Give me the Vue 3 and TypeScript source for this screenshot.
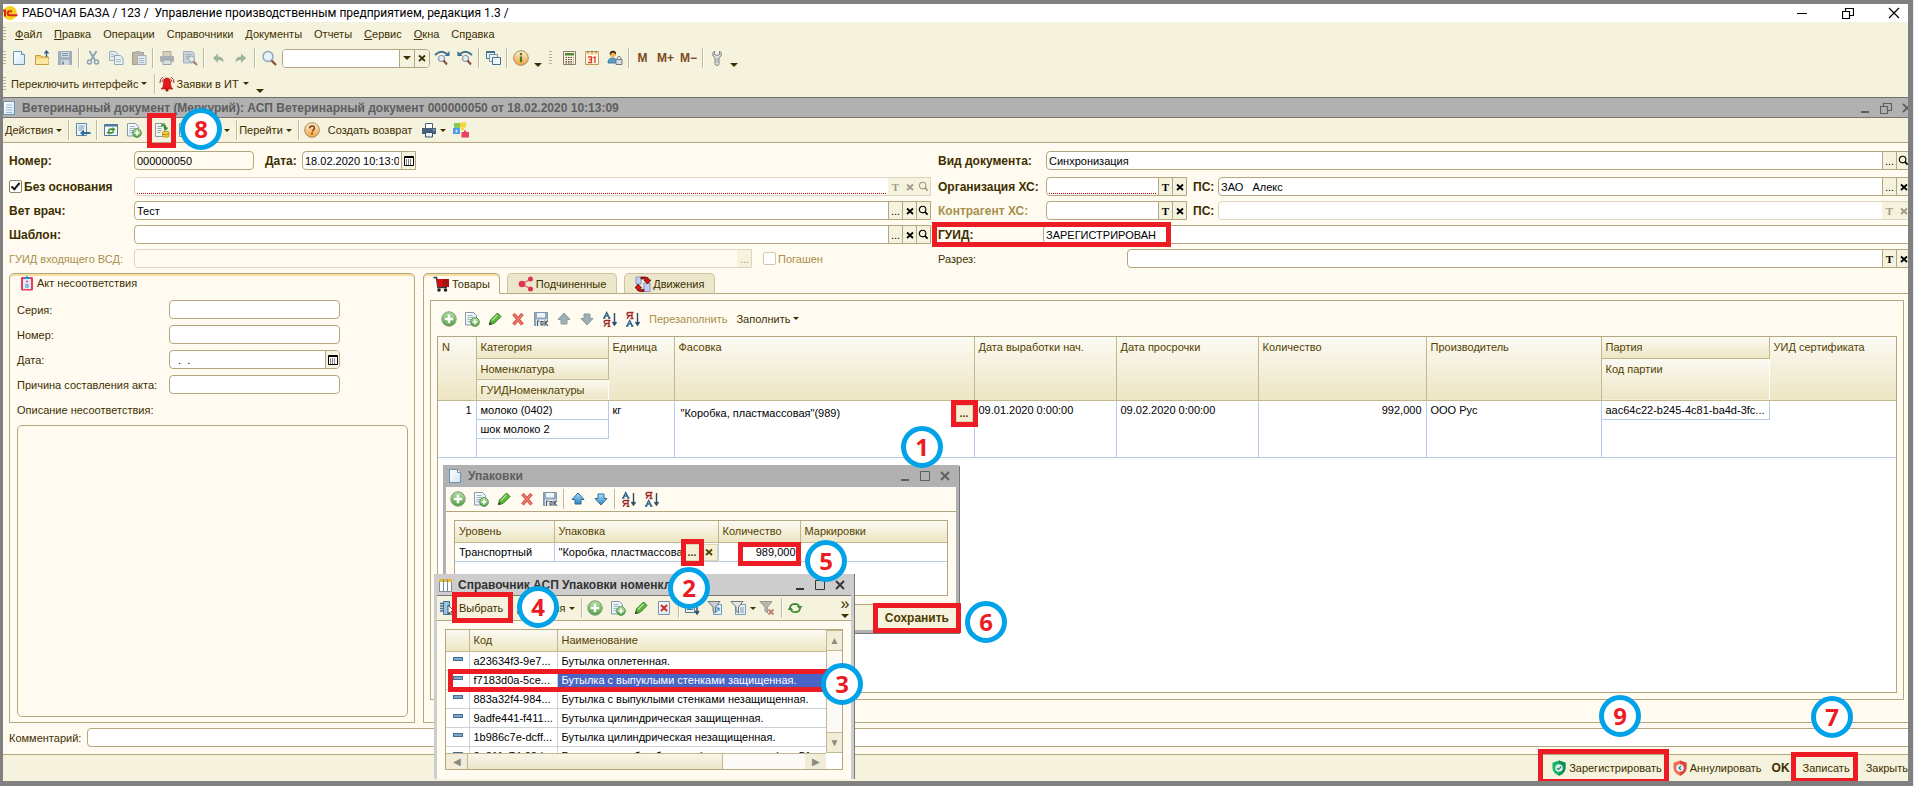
<script setup lang="ts">
import { ref } from 'vue'

interface Callout { n: number; cls: string }

const menu: { pre: string; key: string; post: string }[] = [
  { pre: '', key: 'Ф', post: 'айл' },
  { pre: '', key: 'П', post: 'равка' },
  { pre: 'Операции', key: '', post: '' },
  { pre: 'Справочники', key: '', post: '' },
  { pre: 'Документы', key: '', post: '' },
  { pre: 'Отчеты', key: '', post: '' },
  { pre: '', key: 'С', post: 'ервис' },
  { pre: '', key: 'О', post: 'кна' },
  { pre: 'Сп', key: 'р', post: 'авка' }
]

const mainTools: string[] = [
  'new', 'open', 'save-off', '|', 'cut', 'copy', 'paste', '|', 'print-off', 'preview', '|', 'undo', 'redo', '|', 'zoom'
]
const rowTools: string[] = ['add', 'addcopy', 'edit', 'del', 'saveok', 'up-off', 'down-off', 'sortaz', 'sortza']
const packTools: string[] = ['add', 'addcopy', 'edit', 'del', 'saveok', '|', 'up', 'down', '|', 'sortaz', 'sortza']

const packages = [
  { code: 'a23634f3-9e7...', name: 'Бутылка оплетенная.' },
  { code: 'f7183d0a-5ce...', name: 'Бутылка с выпуклыми стенками защищенная.' },
  { code: '883a32f4-984...', name: 'Бутылка с выпуклыми стенками незащищенная.' },
  { code: '9adfe441-f411...', name: 'Бутылка цилиндрическая защищенная.' },
  { code: '1b986c7e-dcff...', name: 'Бутылка цилиндрическая незащищенная.' },
  { code: '2a811c74-08d...', name: 'Бутылка и колба объемом (вместимостью) до 51' }
]
const selected = ref(1)

const callouts: Callout[] = [1, 2, 3, 4, 5, 6, 7, 8, 9].map(n => ({ n, cls: 'c' + n }))

const noBase = ref(true)
const docNumber = ref('000000050')
const docDate = ref('18.02.2020 10:13:09')
const vet = ref('Тест')
const docKind = ref('Синхронизация')
const org = ref('ЗАО   Алекс')
const guid = ref('ЗАРЕГИСТРИРОВАН')
</script>

<template>
  <svg class="defs" width="0" height="0" aria-hidden="true">
    <defs>
      <linearGradient id="g-green" x1="0" y1="0" x2="0" y2="1"><stop offset="0" stop-color="#b5dfa4" /><stop offset="1" stop-color="#4f9e3f" /></linearGradient>
      <linearGradient id="g-blue" x1="0" y1="0" x2="0" y2="1"><stop offset="0" stop-color="#a9dcf8" /><stop offset="1" stop-color="#2f86c8" /></linearGradient>
      <linearGradient id="g-orange" x1="0" y1="0" x2="0" y2="1"><stop offset="0" stop-color="#fff1cf" /><stop offset="1" stop-color="#f0a23c" /></linearGradient>
      <linearGradient id="g-page" x1="0" y1="0" x2="1" y2="1"><stop offset="0" stop-color="#ffffff" /><stop offset="1" stop-color="#cfe6f6" /></linearGradient>
    </defs>
    <symbol id="i-logo" viewBox="0 0 16 16"><circle cx="7" cy="8" r="7" fill="#f7d21c" /><path d="M0 5.500h2v6M9 6.200H6.500q-1.800 0-1.800 2t1.800 2h8" fill="none" stroke="#d9251d" stroke-width="2" /></symbol>
    <symbol id="i-new" viewBox="0 0 16 16"><path d="M2.500 1.500h8l3 3v10h-11z" fill="url(#g-page)" stroke="#6d93b3" /><path d="M10.500 1.500v3h3" fill="#fff" stroke="#6d93b3" /></symbol>
    <symbol id="i-page" viewBox="0 0 16 16"><path d="M2.500 1.500h11v13h-11z" fill="url(#g-page)" stroke="#6d93b3" /><path d="M5 5h6M5 7.500h6M5 10h6M5 12.500h6" stroke="#a3bccb" /></symbol>
    <symbol id="i-open" viewBox="0 0 16 16"><path d="M1.500 14.500v-9h5l1 1.500h7v7.500z" fill="#f3cf6c" stroke="#c79c3c" /><path d="M2 14v-5.500h12.500V14z" fill="#fbe7a0" /><path d="M12.500 7V1.500M10.500 3.500l2-2.500 2 2.500" fill="none" stroke="#2f5f80" stroke-width="1.300" /></symbol>
    <symbol id="i-save-off" viewBox="0 0 16 16"><path d="M1.500 1.500h13v13h-13z" fill="#9fb2c0" stroke="#9aabb7" /><path d="M4 2h8v5H4zM4 10h8v5H4z" fill="#cfd9df" /><path d="M5 3.500h6M5 5.500h6" stroke="#8499a8" /><path d="M5 11.500h2v3H5z" fill="#7b8e9c" /></symbol>
    <symbol id="i-cut" viewBox="0 0 16 16"><path d="M4.500 1l5.500 9M11.500 1L6 10" stroke="#8da3b3" stroke-width="1.800" /><circle cx="4.500" cy="12" r="2" fill="none" stroke="#8da3b3" stroke-width="1.500" /><circle cx="11.500" cy="12" r="2" fill="none" stroke="#8da3b3" stroke-width="1.500" /></symbol>
    <symbol id="i-copy" viewBox="0 0 16 16"><path d="M1.500 1.500h6l2 2v7h-8z" fill="#e3ebf0" stroke="#9db2c1" /><path d="M6.500 5.500h6l2.500 2.500v6.500H6.500z" fill="#e9f0f4" stroke="#8fa8ba" /><path d="M8 9.500h5M8 11.500h5M3 4.500h3M3 6.500h3" stroke="#a6bac7" /></symbol>
    <symbol id="i-paste" viewBox="0 0 16 16"><path d="M1.500 2.500h11v12h-11z" fill="#c2b8a0" stroke="#a99f88" /><path d="M4.500 1h5v3h-5z" fill="#a9b4bb" /><path d="M6.500 5.500h8.500v9H6.500z" fill="#e2eaf0" stroke="#9db0be" /><path d="M8 8.500h5M8 10.500h5M8 12.500h5" stroke="#a6bac7" /></symbol>
    <symbol id="i-print-off" viewBox="0 0 16 16"><path d="M4 1.500h8v5H4z" fill="#d9cdbd" stroke="#b3a898" /><rect x="1" y="6" width="14" height="6" rx="1" fill="#a9b0b5" /><path d="M4 10h8v4.500H4z" fill="#d8dfe3" stroke="#9aa3aa" /></symbol>
    <symbol id="i-preview" viewBox="0 0 16 16"><path d="M1.500 1.500h9l1.500 1.500v10h-10.500z" fill="#c9d4db" stroke="#a1b1bc" /><path d="M3.500 4.500h6M3.500 6.500h4M3.500 8.500h3" stroke="#9cafbc" /><circle cx="9.500" cy="9" r="3" fill="#dfe9ee" stroke="#97a5ae" /><path d="M11.500 11.500l3.500 3.500" stroke="#a87f6c" stroke-width="2" /></symbol>
    <symbol id="i-undo" viewBox="0 0 16 16"><path d="M3 8l5-4.500v3q6 0 5.500 6-1.500-3-5.500-2.500v3z" fill="#9db4a3" /></symbol>
    <symbol id="i-redo" viewBox="0 0 16 16"><path d="M13 8L8 3.500v3q-6 0-5.500 6 1.500-3 5.500-2.500v3z" fill="#9db4a3" /></symbol>
    <symbol id="i-zoom" viewBox="0 0 16 16"><circle cx="7" cy="6.500" r="5" fill="#e4f2fb" stroke="#8fa5b5" stroke-width="1.400" /><path d="M10.500 10.500l4.500 4.500" stroke="#8d4f40" stroke-width="2.400" /></symbol>
    <symbol id="i-findnext" viewBox="0 0 16 16"><path d="M1 5Q7-1 13 4" fill="none" stroke="#3b6f92" stroke-width="1.800" /><path d="M15.500 1v5h-5z" fill="#3b6f92" /><circle cx="7.500" cy="8.500" r="3" fill="#e4f2fb" stroke="#8d9ba6" stroke-width="1.200" /><path d="M9.500 10.500l3.500 4" stroke="#8d4f40" stroke-width="2" /></symbol>
    <symbol id="i-findprev" viewBox="0 0 16 16"><path d="M15 5Q9-1 3 4" fill="none" stroke="#3b6f92" stroke-width="1.800" /><path d="M.5 1v5h5z" fill="#3b6f92" /><circle cx="8.500" cy="8.500" r="3" fill="#e4f2fb" stroke="#8d9ba6" stroke-width="1.200" /><path d="M10.500 10.500l3.500 4" stroke="#8d4f40" stroke-width="2" /></symbol>
    <symbol id="i-windows" viewBox="0 0 16 16"><path d="M1.500 1.500h8v7h-8z" fill="#eaf3f8" stroke="#45708c" /><path d="M1 2h9" stroke="#45708c" stroke-width="2" /><path d="M4.500 4.500h8v7h-8z" fill="#eaf3f8" stroke="#6f94ab" /><path d="M7.500 7.500h8v7h-8z" fill="#eef6fa" stroke="#45708c" /></symbol>
    <symbol id="i-info" viewBox="0 0 16 16"><circle cx="8" cy="8" r="7.300" fill="url(#g-orange)" stroke="#a98a5e" /><path d="M8 3v2.200M8 6.500V12" stroke="#3f7a26" stroke-width="2.200" /></symbol>
    <symbol id="i-help" viewBox="0 0 16 16"><circle cx="8" cy="8" r="7.300" fill="url(#g-orange)" stroke="#a98a5e" /><path d="M5.700 6.300q0-2.400 2.400-2.400t2.300 2-2.300 3.200" fill="none" stroke="#7a3f1d" stroke-width="1.500" /><path d="M8 10.500v1.800" stroke="#7a3f1d" stroke-width="1.700" /></symbol>
    <symbol id="i-calc" viewBox="0 0 16 16"><path d="M2.500 1.500h12v13h-12z" fill="#fbf3dc" stroke="#8b7a66" /><path d="M4 3h9v2.500H4z" fill="#4f8a3c" /><path d="M4.500 7.500h8M4.500 9.500h8M4.500 11.500h8M4.500 13h8" stroke="#5c4630" stroke-dasharray="1.500 1" /></symbol>
    <symbol id="i-cal" viewBox="0 0 16 16"><path d="M1.500 1.500h13v13h-13z" fill="#fff8e6" stroke="#b79a62" /><path d="M1.500 2.500h13v2h-13z" fill="#f3d9a0" /><path d="M4 1v2M8 1v2M12 1v2" stroke="#6d5530" /><path d="M4 7h3.500v5.500H4M5 9.700h2.500M9 8l2-1v6" fill="none" stroke="#e5381e" stroke-width="1.300" /></symbol>
    <symbol id="i-user" viewBox="0 0 16 16"><path d="M1 13q0-5 4.500-5t4 5z" fill="#5c9fc6" stroke="#2c6a91" stroke-width=".8" /><circle cx="5.800" cy="4.300" r="3" fill="#f5b74f" /><path d="M2.500 4Q3 0 7 .8q3 1 1.800 4Q8 3 6 2.800q-2 0-2 2z" fill="#4b3220" /><path d="M9 9.500h6v5H9z" fill="#d6dee3" stroke="#6d7c87" /><path d="M10.200 9.500v-2q1.800-2.500 3.600 0v2" fill="none" stroke="#6d7c87" /></symbol>
    <symbol id="i-wrench" viewBox="0 0 16 16"><path d="M5.500 1Q2.500 3 4 6l2 1.500v6q0 2 2 2t2-2v-6L12 6q1.500-3-1.500-5v3.500L8 5.500 5.500 4.500z" fill="#e2e3e4" stroke="#808080" /><path d="M8 8v5" stroke="#9a9a9a" /></symbol>
    <symbol id="i-bell" viewBox="0 0 16 16"><path d="M8 2q3.500 0 3.500 5t2.500 6H2q2.500-1 2.500-6T8 2z" fill="#e01818" stroke="#9c1010" stroke-width=".6" /><circle cx="8" cy="14" r="1.600" fill="#b31111" /><path d="M1 7Q.5 3 4 1M15 7q.5-4-3-6M3 6q0-2 2-3.500M13 6q0-2-2-3.500" fill="none" stroke="#b03030" /></symbol>
    <symbol id="i-find-list" viewBox="0 0 16 16"><path d="M1.500 1.500h10v12h-10z" fill="#eef5fa" stroke="#5d87a6" /><path d="M3.500 4h6M3.500 6h6M3.500 8h4" stroke="#7699b0" /><path d="M5 11l4-3.500V10h6.500v2H9v2.500z" fill="#2f6d9b" /></symbol>
    <symbol id="i-refresh" viewBox="0 0 16 16"><path d="M1.500 2.500h13v11h-13z" fill="#f2f8fb" stroke="#4c7899" /><path d="M1 2.500h14v2H1z" fill="#4c7899" /><path d="M4.500 8.500q1.500-3 5-2l0-1.500 3 2.500-3 2V8.200q-2.500-.6-3.500.6zM11.500 9.500q-1.500 3-5 2l0 1.500-3-2.500 3-2v1.300q2.500.6 3.500-.6z" fill="#3d8f2e" /></symbol>
    <symbol id="i-addcopy" viewBox="0 0 16 16"><path d="M1.500 1.500h8l3 3v9.500h-11z" fill="url(#g-page)" stroke="#8a9aa5" /><path d="M3.500 4.500h5M3.500 6.500h6M3.500 8.500h4M3.500 10.500h3" stroke="#9fb4c0" /><circle cx="11" cy="11" r="4.400" fill="url(#g-green)" stroke="#4a8a3d" stroke-width=".8" /><path d="M11 8.500v5M8.500 11h5" stroke="#fff" stroke-width="1.700" /></symbol>
    <symbol id="i-post" viewBox="0 0 16 16"><path d="M1.500 1.500h9v13h-9z" fill="#f1f5ee" stroke="#8a9aa5" /><path d="M3.500 4.500h5M3.500 6.500h4M3.500 8.500h4M3.500 10.500h3" stroke="#93a6b0" /><path d="M7 2.500q5-1.500 5.500 3h2L12 8.500 9 5.500h1.500q0-2-3.500-1.500z" fill="#2f8f2a" /><path d="M8.500 10q3.500-2 6.500 0v4.500q-3 1.500-6.500 0z" fill="#f3cd3e" stroke="#b58c17" stroke-width=".8" /><path d="M8.500 12q3 1.500 6.500 0" stroke="#b58c17" fill="none" /></symbol>
    <symbol id="i-print" viewBox="0 0 16 16"><path d="M4.500 1.500h7v5h-7z" fill="#fff" stroke="#47637c" /><path d="M1 6h14v6H1z" fill="#47637c" /><path d="M4.500 10.500h7v4.500h-7z" fill="#eaf1f6" stroke="#3a5268" /><path d="M12 8h2" stroke="#9fd6f0" /></symbol>
    <symbol id="i-puzzle" viewBox="0 0 16 16"><path d="M1 1h6v5H1z" fill="#8ac75d" /><path d="M7 .5h6v5H7z" fill="#f3d834" /><circle cx="9.500" cy="7" r="1.600" fill="#f3d834" /><path d="M0 6h7v6H0z" fill="#4f9be6" /><path d="M2 9h3M3.500 7.500v3" stroke="#cfe6ff" /><path d="M8.500 10H11V8.500h2V10h3v5.500H8.500z" fill="#e8405f" /></symbol>
    <symbol id="i-add" viewBox="0 0 16 16"><circle cx="8" cy="8" r="7.200" fill="url(#g-green)" stroke="#7d9b76" /><path d="M8 3.800v8.400M3.800 8h8.400" stroke="#fff" stroke-width="2.600" /></symbol>
    <symbol id="i-edit" viewBox="0 0 16 16"><path d="M2.500 13.500l1-4.500 7-7 3.500 3.500-7 7z" fill="#5cb83a" stroke="#2e7d1c" /><path d="M2 14l.8-3 2.200 2.200z" fill="#3e3e2a" /><path d="M5 9.500L10.500 4" stroke="#b4e49c" stroke-width="1.300" /></symbol>
    <symbol id="i-del" viewBox="0 0 16 16"><path d="M3.500 3l9 10.500M12.500 3l-9 10.500" stroke="#c9423a" stroke-width="3.400" /><path d="M3.700 3.300l8.600 10M12.300 3.300l-8.600 10" stroke="#f0766a" stroke-width="1.800" /></symbol>
    <symbol id="i-saveok" viewBox="0 0 16 16"><path d="M1.500 1.500h13v13h-13z" fill="#90a9bd" stroke="#7b97ad" /><path d="M4 2h8v4.500H4z" fill="#edf3f7" /><path d="M3 8.500h12v6.500H3z" fill="#e8eef2" /><path d="M4.500 10v5M4 10h2.500M8 10.500h2v3.500H8zM12 9.500V15M15 9.500L12.500 12l2.500 3" fill="none" stroke="#4a5560" stroke-width="1.100" /></symbol>
    <symbol id="i-up-off" viewBox="0 0 16 16"><path d="M8 2l6 6.500h-3V13H5V8.500H2z" fill="#9daeb4" stroke="#8b9ca2" /></symbol>
    <symbol id="i-down-off" viewBox="0 0 16 16"><path d="M8 14L2 7.500h3V3h6v4.500h3z" fill="#9daeb4" stroke="#8b9ca2" /></symbol>
    <symbol id="i-up" viewBox="0 0 16 16"><path d="M8 2l6 6.500h-3V13H5V8.500H2z" fill="url(#g-blue)" stroke="#2b6c9d" /></symbol>
    <symbol id="i-down" viewBox="0 0 16 16"><path d="M8 14L2 7.500h3V3h6v4.500h3z" fill="url(#g-blue)" stroke="#2b6c9d" /></symbol>
    <symbol id="i-sortaz" viewBox="0 0 16 16"><path d="M1 7h2.500M6 7h2.500M2 7l2.700-5.500L7.500 7M3 5h3.500" fill="none" stroke="#2c6389" stroke-width="1.300" /><path d="M8.500 9.500H4q-2 0-2 1.500t2 1.500h3M7 9.500v6M4.500 12.500L2 15.500M5.500 15.500h3" fill="none" stroke="#a02828" stroke-width="1.300" /><path d="M12.500 2v11M10.500 11l2 3 2-3" fill="none" stroke="#2a4d66" stroke-width="1.400" /></symbol>
    <symbol id="i-sortza" viewBox="0 0 16 16"><path d="M8.500 1.500H4Q2 1.500 2 3t2 1.500h3M7 1.500v6M4.500 4.500L2 7.500M5.500 7.500h3" fill="none" stroke="#a02828" stroke-width="1.300" /><path d="M1 15h2.500M6 15h2.500M2 15l2.700-5.500L7.500 15M3 13h3.500" fill="none" stroke="#2c6389" stroke-width="1.300" /><path d="M12.500 2v11M10.500 11l2 3 2-3" fill="none" stroke="#2a4d66" stroke-width="1.400" /></symbol>
    <symbol id="i-clip" viewBox="0 0 16 16"><rect x="2" y="2" width="12" height="13.500" rx="1" fill="#ef3b5b" /><path d="M4 4h8v10H4z" fill="#dcecf8" /><path d="M5 4V2.500h1.500L8 .5l1.500 2H11V4z" fill="#2b8fe0" /><path d="M6 10h4M6 12h4M8 8.500v4" stroke="#5aa6df" /><circle cx="8" cy="6.500" r="1" fill="#ef3b5b" /></symbol>
    <symbol id="i-cart" viewBox="0 0 16 16"><path d="M.5 1.500h3l1.500 10h9" fill="none" stroke="#2d3b42" stroke-width="1.600" /><path d="M3.500 3H16v8H5z" fill="#d80f0f" /><path d="M10 3h6v8h-6z" fill="#9f1414" /><circle cx="6" cy="14" r="1.800" fill="#222" /><circle cx="12.500" cy="14" r="1.800" fill="#222" /></symbol>
    <symbol id="i-share" viewBox="0 0 16 16"><path d="M13 3L3.500 8l9.500 5" fill="none" stroke="#c88" stroke-width="1.500" /><circle cx="4" cy="8" r="3.300" fill="#e0354f" /><circle cx="12.500" cy="3" r="2.500" fill="#e0354f" /><circle cx="12.500" cy="13" r="2.500" fill="#e0354f" /></symbol>
    <symbol id="i-moves" viewBox="0 0 16 16"><path d="M1 1h5v7H1zM9 7h6v8.500H9z" fill="#c7cff0" stroke="#8b95c9" /><path d="M6 1h4q4 0 4 3h2l-3.500 4L9 4h2q0-1-2-1H6zM9 15.500H5q-3.500-.5-3.500-3.500H0l3-4 3.500 4H5q0 1.500 1 1.500h3z" fill="#e01414" stroke="#3a0808" stroke-width=".7" /></symbol>
    <symbol id="i-delpage" viewBox="0 0 16 16"><path d="M2.500 1.500h11v13h-11z" fill="url(#g-page)" stroke="#7d95a6" /><path d="M5 5l6 6M11 5l-6 6" stroke="#d32b22" stroke-width="2" /></symbol>
    <symbol id="i-level" viewBox="0 0 16 16"><path d="M1.500 3.500h9v9h-9z" fill="#e9f0f4" stroke="#5d7588" /><path d="M3 6.500h6M3 9.500h6" stroke="#5d7588" /><path d="M13 4v9M11 11l2 3 2-3" fill="none" stroke="#2a4d66" stroke-width="1.400" /></symbol>
    <symbol id="i-filter" viewBox="0 0 16 16"><path d="M6.500 4.500h8v10h-8z" fill="#dbeefa" stroke="#6f9fc0" /><path d="M9 12l3-4M9 8h3v3" fill="none" stroke="#2d78b0" /><path d="M1 1.500h12L8.500 7v6l-2.500-2V7z" fill="#c9ced1" stroke="#6f7578" /></symbol>
    <symbol id="i-filterlist" viewBox="0 0 16 16"><path d="M5.500 4.500h10v10h-10z" fill="#e6f1f8" stroke="#7f9cb0" /><path d="M10 8h4M10 10h4M10 12h4" stroke="#7f9cb0" /><path d="M1 1.500h12L8.500 7v6l-2.500-2V7z" fill="#e3e5e6" stroke="#6f7578" /></symbol>
    <symbol id="i-filteroff" viewBox="0 0 16 16"><path d="M1 1.500h12L8.500 7v6l-2.500-2V7z" fill="#b8b8ae" stroke="#98988e" /><path d="M9.500 9.500l5 5M14.500 9.500l-5 5" stroke="#c08078" stroke-width="1.800" /></symbol>
    <symbol id="i-cycle" viewBox="0 0 16 16"><path d="M3 8q0-4 5-4.200 3 0 4 2.200M13 8q0 4-5 4.200-3 0-4-2.200" fill="none" stroke="#3f8a35" stroke-width="1.700" /><path d="M9.800 6h5.700l-2.700 3.400zM6.200 10H.5l2.700-3.400z" fill="#3f8a35" /></symbol>
    <symbol id="i-select" viewBox="0 0 16 16"><path d="M1 3.500h5M1 6h5M1 8.500h5M1 11h5" stroke="#3b7299" stroke-width="1.500" /><path d="M4.500 1.500h6v13h-6z" fill="#9cc4de" stroke="#3b7299" /><path d="M9 5l6 6-3 .3 1.500 3-1.500.7-1.500-3-1.500 2z" fill="#fff" stroke="#333" stroke-width=".8" /></symbol>
    <symbol id="i-table" viewBox="0 0 16 16"><path d="M2.500 2.500h12v12h-12z" fill="#fff" stroke="#7a8a95" /><path d="M2 2h13v3H2z" fill="#e9b93a" /><path d="M6.500 2v12.500M10.500 2v12.500" stroke="#7a8a95" /></symbol>
    <symbol id="i-shield-ok" viewBox="0 0 16 16"><path d="M8 .5l6.500 2.300V8q0 5-6.500 7.800Q1.500 13 1.500 8V2.800z" fill="#12b76a" /><path d="M8 .5l6.500 2.300V8q0 5-6.500 7.800z" fill="#0a9152" /><circle cx="8" cy="8" r="3.800" fill="#dff0ee" /><path d="M6 8l1.500 1.600L10.200 6.500" fill="none" stroke="#3b7f86" stroke-width="1.200" /></symbol>
    <symbol id="i-shield-no" viewBox="0 0 16 16"><path d="M8 .5l6.500 2.300V8q0 5-6.500 7.800Q1.500 13 1.500 8V2.800z" fill="#f46a55" /><path d="M8 .5l6.500 2.300V8q0 5-6.500 7.800z" fill="#dd4536" /><circle cx="8" cy="8" r="3.800" fill="#dff0f2" /><path d="M9 6L7 8l2 2" fill="none" stroke="#3b7f86" stroke-width="1.200" /></symbol>
    <symbol id="i-lens" viewBox="0 0 12 12"><circle cx="5" cy="5" r="3.600" fill="none" stroke="currentColor" stroke-width="1.200" /><path d="M7.500 7.500l3 3" stroke="currentColor" stroke-width="2" /></symbol>
    <symbol id="i-grid" viewBox="0 0 10 10"><path d="M.5 .5h9v9h-9z" fill="#fff" stroke="#000" /><path d="M1 1.500h8" stroke="#000" /><path d="M2 4h6M2 6h6M2 8h6" stroke="#000" stroke-dasharray="1 1" /></symbol>
    <symbol id="i-x" viewBox="0 0 8 8"><path d="M1 1.500l6 5.500M7 1.500L1 7" stroke="currentColor" stroke-width="1.700" /></symbol>
    <symbol id="i-min" viewBox="0 0 12 12"><path d="M2 10h8" stroke="currentColor" stroke-width="2" /></symbol>
    <symbol id="i-thinmin" viewBox="0 0 12 12"><path d="M1 6.500h10" stroke="currentColor" /></symbol>
    <symbol id="i-max" viewBox="0 0 12 12"><path d="M1.500 1.500h9v9h-9z" fill="none" stroke="currentColor" /></symbol>
    <symbol id="i-restore" viewBox="0 0 12 12"><path d="M.5 4.500h7v7h-7zM3.500 4V1.500h8v7H8" fill="none" stroke="currentColor" stroke-width="1.200" /></symbol>
    <symbol id="i-close" viewBox="0 0 12 12"><path d="M2 2l8 8M10 2l-8 8" stroke="currentColor" stroke-width="1.800" /></symbol>
    <symbol id="i-thinclose" viewBox="0 0 12 12"><path d="M1 1l10 10M11 1L1 11" stroke="currentColor" stroke-width="1.200" /></symbol>
  </svg>

  <div class="screen">
    <div class="app">
      <header class="apptitle">
        <svg class="i16"><use href="#i-logo" /></svg>
        <h1>РАБОЧАЯ БАЗА / 123 /&nbsp; Управление производственным предприятием, редакция 1.3 /</h1>
        <span class="appbtns">
          <button aria-label="Свернуть"><svg class="i12"><use href="#i-thinmin" /></svg></button>
          <button aria-label="Развернуть"><svg class="i12"><use href="#i-restore" /></svg></button>
          <button aria-label="Закрыть"><svg class="i12"><use href="#i-thinclose" /></svg></button>
        </span>
      </header>

      <nav class="menu">
        <span class="grip"></span>
        <button v-for="m in menu" :key="m.pre + m.key + m.post">{{ m.pre }}<u v-if="m.key">{{ m.key }}</u>{{ m.post }}</button>
      </nav>

      <div class="tools">
        <span class="grip"></span>
        <template v-for="(t, i) in mainTools" :key="i">
          <span v-if="t === '|'" class="sep"></span>
          <button v-else class="tb" :aria-label="t"><svg class="i16"><use :href="'#i-' + t" /></svg></button>
        </template>
        <div class="search">
          <input type="text" aria-label="Поиск" />
          <button aria-label="Список"><i class="arr"></i></button>
          <button aria-label="Очистить"><svg class="i9"><use href="#i-x" /></svg></button>
        </div>
        <button class="tb" aria-label="Далее"><svg class="i16"><use href="#i-findnext" /></svg></button>
        <button class="tb" aria-label="Назад"><svg class="i16"><use href="#i-findprev" /></svg></button>
        <span class="sep"></span>
        <button class="tb" aria-label="Окна"><svg class="i16"><use href="#i-windows" /></svg></button>
        <span class="sep"></span>
        <button class="tb" aria-label="Информация"><svg class="i16"><use href="#i-info" /></svg></button>
        <span class="more"><i class="arr"></i></span>
        <span class="grip mid"></span>
        <button class="tb" aria-label="Калькулятор"><svg class="i16"><use href="#i-calc" /></svg></button>
        <button class="tb" aria-label="Календарь"><svg class="i16"><use href="#i-cal" /></svg></button>
        <button class="tb" aria-label="Пользователи"><svg class="i16"><use href="#i-user" /></svg></button>
        <span class="sep"></span>
        <button class="tb mem">M</button>
        <button class="tb mem">M+</button>
        <button class="tb mem">M−</button>
        <span class="sep"></span>
        <button class="tb" aria-label="Сервис"><svg class="i16"><use href="#i-wrench" /></svg></button>
        <span class="more"><i class="arr"></i></span>
      </div>

      <div class="tools second">
        <span class="grip"></span>
        <button class="txt">Переключить интерфейс <i class="arr"></i></button>
        <span class="sep"></span>
        <button class="txt bell"><svg class="i16"><use href="#i-bell" /></svg>Заявки в ИТ <i class="arr"></i></button>
        <span class="more"><i class="arr"></i></span>
      </div>

      <section class="doc">
        <header class="doctitle">
          <svg class="i16"><use href="#i-page" /></svg>
          <h2>Ветеринарный документ (Меркурий): АСП Ветеринарный документ 000000050 от 18.02.2020 10:13:09</h2>
          <span class="docbtns">
            <button aria-label="Свернуть"><svg class="i12"><use href="#i-min" /></svg></button>
            <button aria-label="Развернуть"><svg class="i12"><use href="#i-restore" /></svg></button>
            <button aria-label="Закрыть"><svg class="i12"><use href="#i-close" /></svg></button>
          </span>
        </header>

        <div class="doctools">
          <button class="txt">Действия <i class="arr"></i></button>
          <span class="sep"></span>
          <button class="tb" aria-label="Найти в списке"><svg class="i16"><use href="#i-find-list" /></svg></button>
          <span class="sep"></span>
          <button class="tb" aria-label="Обновить"><svg class="i16"><use href="#i-refresh" /></svg></button>
          <button class="tb" aria-label="Скопировать"><svg class="i16"><use href="#i-addcopy" /></svg></button>
          <span class="sep"></span>
          <button class="tb hl hl8" aria-label="Провести"><svg class="i16"><use href="#i-post" /></svg></button>
          <button class="tb" aria-label="Отменить проведение"><svg class="i16"><use href="#i-page" /></svg></button>
          <button class="txt sub" aria-label="На основании"><i class="arr"></i></button>
          <span class="sep"></span>
          <button class="txt">Перейти <i class="arr"></i></button>
          <span class="sep"></span>
          <button class="tb" aria-label="Справка"><svg class="i16"><use href="#i-help" /></svg></button>
          <button class="txt wide">Создать возврат</button>
          <button class="tb" aria-label="Печать"><svg class="i16"><use href="#i-print" /></svg></button>
          <i class="arr"></i>
          <button class="tb puzzle" aria-label="Обработки"><svg class="i16"><use href="#i-puzzle" /></svg></button>
        </div>

        <form class="form" @submit.prevent>
          <div class="row">
            <label class="lab b" for="f-num">Номер:</label>
            <span class="field num ro"><input id="f-num" v-model="docNumber" type="text" /></span>
            <label class="lab b date" for="f-date">Дата:</label>
            <span class="field dt"><input id="f-date" v-model="docDate" type="text" /><button aria-label="Календарь"><svg class="i10"><use href="#i-grid" /></svg></button></span>
          </div>
          <div class="row">
            <label class="lab b rlab" for="f-kind">Вид документа:</label>
            <span class="field grow"><input id="f-kind" v-model="docKind" type="text" /><button>...</button><button aria-label="Открыть"><svg class="i11"><use href="#i-lens" /></svg></button></span>
          </div>

          <div class="row">
            <label class="lab b check"><input v-model="noBase" type="checkbox" />Без основания</label>
            <span class="field grow off req"><input type="text" aria-label="Основание" /><button class="t">T</button><button aria-label="Очистить"><svg class="i9"><use href="#i-x" /></svg></button><button aria-label="Открыть"><svg class="i11"><use href="#i-lens" /></svg></button></span>
          </div>
          <div class="row">
            <label class="lab b rlab" for="f-org">Организация ХС:</label>
            <span class="field hs req"><input id="f-org" type="text" /><button class="t">T</button><button aria-label="Очистить"><svg class="i9"><use href="#i-x" /></svg></button></span>
            <label class="lab b ps" for="f-ps1">ПС:</label>
            <span class="field grow"><input id="f-ps1" v-model="org" type="text" /><button>...</button><button aria-label="Очистить"><svg class="i9"><use href="#i-x" /></svg></button></span>
          </div>

          <div class="row">
            <label class="lab b" for="f-vet">Вет врач:</label>
            <span class="field grow"><input id="f-vet" v-model="vet" type="text" /><button>...</button><button aria-label="Очистить"><svg class="i9"><use href="#i-x" /></svg></button><button aria-label="Открыть"><svg class="i11"><use href="#i-lens" /></svg></button></span>
          </div>
          <div class="row">
            <label class="lab b rlab dim" for="f-agent">Контрагент ХС:</label>
            <span class="field hs"><input id="f-agent" type="text" /><button class="t">T</button><button aria-label="Очистить"><svg class="i9"><use href="#i-x" /></svg></button></span>
            <label class="lab b ps" for="f-ps2">ПС:</label>
            <span class="field grow off"><input id="f-ps2" type="text" /><button class="t">T</button><button aria-label="Очистить"><svg class="i9"><use href="#i-x" /></svg></button></span>
          </div>

          <div class="row">
            <label class="lab b" for="f-tpl">Шаблон:</label>
            <span class="field grow"><input id="f-tpl" type="text" /><button>...</button><button aria-label="Очистить"><svg class="i9"><use href="#i-x" /></svg></button><button aria-label="Открыть"><svg class="i11"><use href="#i-lens" /></svg></button></span>
          </div>
          <div class="row hl hlg">
            <label class="lab b rlab" for="f-guid">ГУИД:</label>
            <span class="field grow"><input id="f-guid" v-model="guid" type="text" /></span>
          </div>

          <div class="row">
            <label class="lab dim" for="f-in">ГУИД входящего ВСД:</label>
            <span class="field vsd off ro"><input id="f-in" type="text" /><button>...</button></span>
            <label class="check off dim"><input type="checkbox" disabled />Погашен</label>
          </div>
          <div class="row">
            <label class="lab rz" for="f-cut">Разрез:</label>
            <span class="field grow"><input id="f-cut" type="text" /><button class="t">T</button><button aria-label="Очистить"><svg class="i9"><use href="#i-x" /></svg></button></span>
          </div>
        </form>

        <div class="panels">
          <section class="act">
            <h3><svg class="i16"><use href="#i-clip" /></svg>Акт несоответствия</h3>
            <div class="arow"><label for="a-ser">Серия:</label><span class="field"><input id="a-ser" type="text" /></span></div>
            <div class="arow"><label for="a-num">Номер:</label><span class="field"><input id="a-num" type="text" /></span></div>
            <div class="arow"><label for="a-date">Дата:</label><span class="field"><input id="a-date" type="text" value="  .  ." /><button aria-label="Календарь"><svg class="i10"><use href="#i-grid" /></svg></button></span></div>
            <div class="arow"><label for="a-why">Причина составления акта:</label><span class="field"><input id="a-why" type="text" /></span></div>
            <div class="arow"><label for="a-desc">Описание несоответствия:</label></div>
            <textarea id="a-desc"></textarea>
          </section>

          <section class="goods">
            <div class="tabs" role="tablist">
              <button role="tab" class="on"><svg class="i16"><use href="#i-cart" /></svg>Товары</button>
              <button role="tab"><svg class="i16"><use href="#i-share" /></svg>Подчиненные</button>
              <button role="tab"><svg class="i16"><use href="#i-moves" /></svg>Движения</button>
            </div>
            <div class="body">
              <div class="inner">
                <div class="gtools">
                  <button v-for="t in rowTools" :key="t" class="tb" :aria-label="t"><svg class="i16"><use :href="'#i-' + t" /></svg></button>
                  <button class="txt dim refill">Перезаполнить</button>
                  <button class="txt">Заполнить <i class="arr"></i></button>
                </div>
                <div class="tablebox">
                  <table class="grid">
                    <colgroup>
                      <col class="w-n" /><col class="w-cat" /><col class="w-unit" /><col class="w-pack" /><col class="w-d" /><col class="w-d" />
                      <col class="w-q" /><col class="w-m" /><col class="w-q" /><col />
                    </colgroup>
                    <thead>
                      <tr>
                        <th rowspan="3">N</th><th>Категория</th><th rowspan="3">Единица</th><th rowspan="3">Фасовка</th>
                        <th rowspan="3">Дата выработки нач.</th><th rowspan="3">Дата просрочки</th><th rowspan="3">Количество</th>
                        <th rowspan="3">Производитель</th><th>Партия</th><th rowspan="3">УИД сертификата</th>
                      </tr>
                      <tr><th>Номенклатура</th><th rowspan="2">Код партии</th></tr>
                      <tr><th>ГУИДНоменклатуры</th></tr>
                    </thead>
                    <tbody>
                      <tr>
                        <td rowspan="3" class="r">1</td><td>молоко (0402)</td><td rowspan="3">кг</td>
                        <td rowspan="3" class="pk"><div>"Коробка, пластмассовая"(989)<button class="dots hl hl1">...</button></div></td>
                        <td rowspan="3">09.01.2020 0:00:00</td><td rowspan="3">09.02.2020 0:00:00</td><td rowspan="3" class="r">992,000</td>
                        <td rowspan="3">ООО Рус</td><td>aac64c22-b245-4c81-ba4d-3fc...</td><td rowspan="3"></td>
                      </tr>
                      <tr><td>шок молоко 2</td><td rowspan="2"></td></tr>
                      <tr><td></td></tr>
                    </tbody>
                  </table>
                </div>
              </div>
            </div>
          </section>
        </div>

        <div class="comment">
          <label for="f-com">Комментарий:</label>
          <span class="field grow"><input id="f-com" type="text" /></span>
        </div>

        <footer class="foot">
          <button class="hl hl9"><svg class="i16"><use href="#i-shield-ok" /></svg>Зарегистрировать</button>
          <button class="annul"><svg class="i16"><use href="#i-shield-no" /></svg>Аннулировать</button>
          <button class="ok">OK</button>
          <button class="write hl hl7">Записать</button>
          <button class="shut">Закрыть</button>
        </footer>
      </section>
    </div>

    <section class="dlg packs" role="dialog" aria-label="Упаковки">
      <header>
        <svg class="i16"><use href="#i-new" /></svg>
        <h2>Упаковки</h2>
        <button aria-label="Свернуть"><svg class="i12"><use href="#i-min" /></svg></button>
        <button aria-label="Развернуть"><svg class="i12"><use href="#i-max" /></svg></button>
        <button aria-label="Закрыть"><svg class="i12"><use href="#i-close" /></svg></button>
      </header>
      <div class="dtools">
        <template v-for="(t, i) in packTools" :key="i">
          <span v-if="t === '|'" class="sep"></span>
          <button v-else class="tb" :aria-label="t"><svg class="i16"><use :href="'#i-' + t" /></svg></button>
        </template>
      </div>
      <div class="pbox">
        <table class="grid">
          <colgroup><col class="p1" /><col class="p2" /><col class="p3" /><col /></colgroup>
          <thead><tr><th>Уровень</th><th>Упаковка</th><th>Количество</th><th>Маркировки</th></tr></thead>
          <tbody>
            <tr>
              <td>Транспортный</td>
              <td class="pe"><div><span>"Коробка, пластмассовая"</span><button class="dots hl hl2">...</button><button class="dots" aria-label="Очистить"><svg class="i9"><use href="#i-x" /></svg></button></div></td>
              <td class="r hl hl5">989,000</td>
              <td></td>
            </tr>
          </tbody>
        </table>
      </div>
      <div class="pfoot"><button class="hl hl6">Сохранить</button></div>
    </section>

    <section class="dlg catalog" role="dialog" aria-label="Справочник">
      <header>
        <svg class="i16"><use href="#i-table" /></svg>
        <h2>Справочник АСП Упаковки номенклатуры</h2>
        <button aria-label="Свернуть"><svg class="i12"><use href="#i-min" /></svg></button>
        <button aria-label="Развернуть"><svg class="i12"><use href="#i-max" /></svg></button>
        <button aria-label="Закрыть"><svg class="i12"><use href="#i-close" /></svg></button>
      </header>
      <div class="ctools">
        <svg class="i16"><use href="#i-select" /></svg>
        <button class="txt hl hl4">Выбрать</button>
        <button class="txt acts">Действия <i class="arr"></i></button>
        <span class="sep"></span>
        <button class="tb" aria-label="Добавить"><svg class="i16"><use href="#i-add" /></svg></button>
        <button class="tb" aria-label="Скопировать"><svg class="i16"><use href="#i-addcopy" /></svg></button>
        <button class="tb" aria-label="Изменить"><svg class="i16"><use href="#i-edit" /></svg></button>
        <button class="tb" aria-label="Удалить"><svg class="i16"><use href="#i-delpage" /></svg></button>
        <span class="sep"></span>
        <button class="tb" aria-label="Иерархия"><svg class="i16"><use href="#i-level" /></svg></button>
        <button class="tb" aria-label="Отбор"><svg class="i16"><use href="#i-filter" /></svg></button>
        <button class="tb" aria-label="Список отборов"><svg class="i16"><use href="#i-filterlist" /></svg></button>
        <i class="arr"></i>
        <button class="tb" aria-label="Отключить отбор"><svg class="i16"><use href="#i-filteroff" /></svg></button>
        <span class="sep"></span>
        <button class="tb" aria-label="Обновить"><svg class="i16"><use href="#i-cycle" /></svg></button>
        <button class="over">»<i class="arr"></i></button>
      </div>
      <div class="cbox">
        <div class="crows">
          <table class="grid">
            <colgroup><col class="k1" /><col class="k2" /><col /></colgroup>
            <thead><tr><th></th><th>Код</th><th>Наименование</th></tr></thead>
            <tbody>
              <tr v-for="(p, i) in packages" :key="p.code" :class="{ sel: i === selected }" @click="selected = i">
                <td><i class="dash"></i></td><td>{{ p.code }}</td><td>{{ p.name }}</td>
              </tr>
            </tbody>
          </table>
        </div>
        <div class="vbar"><span>▲</span><i></i><span>▼</span></div>
        <div class="hbar"><span>◀</span><i></i><em></em><span>▶</span></div>
      </div>
      <div class="frame3"></div>
    </section>

    <span v-for="c in callouts" :key="c.n" class="callout" :class="c.cls">{{ c.n }}</span>
  </div>
</template>

<style>
html, body { height: 100%; overflow: hidden; }
#app { height: 100%; }
</style>

<style scoped>
*, *::before, *::after { box-sizing: border-box; }
.defs { position: absolute; }
.screen {
  position: relative; height: 100%; overflow: hidden; background: #808080;
  border-right: 1px solid #eeeeee; padding: 4px 5px 5px 3px;
  font: 11px/14px "Liberation Sans", Arial, sans-serif; color: #3d2f00;
}
.app { height: 100%; display: flex; flex-direction: column; overflow: hidden; background: #f5f2dd; }
button { font: inherit; color: inherit; background: none; border: 0; padding: 0; margin: 0; display: inline-flex; align-items: center; justify-content: center; white-space: nowrap; flex: none; }
input { font: inherit; margin: 0; }
h1, h2, h3 { margin: 0; white-space: nowrap; }
svg { flex: none; display: block; }
.i16 { width: 16px; height: 16px; }
.i12 { width: 12px; height: 12px; }
.i11 { width: 11px; height: 11px; }
.i10 { width: 10px; height: 10px; }
.i9 { width: 8px; height: 8px; }
.b { font-weight: bold; font-size: 12px; }
.dim { color: #a88f4d; }
.arr { display: inline-block; flex: none; border: 3px solid transparent; border-top-color: #3d2f00; border-bottom: 0; }
.sep { width: 5px; height: 20px; flex: none; background: linear-gradient(90deg, transparent 2px, #c3bb97 2px, #c3bb97 3px, #ffffff 3px, #ffffff 4px, transparent 4px); }
.grip { width: 3px; height: 14px; flex: none; background: repeating-linear-gradient(#b9b295 0 1px, transparent 1px 3px); }

.apptitle { display: flex; align-items: center; height: 18px; flex: none; background: #ffffff; color: #000000; }
.apptitle h1 { font: 12px/18px Roboto, sans-serif; margin-left: 3px; flex: 1; }
.appbtns { display: flex; align-items: center; gap: 34px; padding-right: 8px; }

.menu { display: flex; align-items: center; height: 24px; flex: none; }
.menu button { margin-left: 12px; }
.menu .grip + button { margin-left: 9px; }
.tools { display: flex; align-items: center; height: 24px; flex: none; }
.tools .grip { margin-right: 1px; }
.tools .mid { margin: 0 5px; }
.tb { width: 23px; height: 22px; }
.txt .arr { margin-left: 5px; }
.second { height: 27px; }
.second .txt { margin: 0 5px 0 4px; }
.second .txt .arr { margin-left: 2px; }
.second .bell { gap: 2px; margin-left: 2px; }
.more { width: 12px; display: flex; justify-content: center; padding-top: 14px; }
.more .arr, .search .arr { border-width: 4px 4px 0; }
.mem { font-weight: bold; font-size: 12px; color: #7a4a22; }
.search { display: flex; width: 148px; height: 19px; margin: 0 0 0 2px; border: 1px solid #b3a780; border-radius: 4px; background: #ffffff; overflow: hidden; }
.search input { flex: 1; min-width: 0; border: 0; }
.search button { width: 15px; border-left: 1px solid #b3a780; background: #f5f2dd; color: #3d2f00; }

.doc { flex: 1; min-height: 0; display: flex; flex-direction: column; background: #fffbf0; }
.doctitle { display: flex; align-items: center; height: 21px; flex: none; background: #b1b1b1; border-top: 1px solid #6f6f6f; border-bottom: 1px solid #7a7570; color: #5e5e5e; }
.doctitle .i16 { margin-left: -2px; }
.doctitle h2 { font: bold 12px/18px "Liberation Sans", Arial, sans-serif; margin-left: 5px; flex: 1; }
.docbtns { display: flex; gap: 9px; margin-right: -5px; }
.docbtns .i16 { margin: 0; }
.doctools { display: flex; align-items: center; height: 25px; flex: none; background: #f5f2dd; border-bottom: 1px solid #b3a780; padding-left: 2px; }
.doctools .txt { margin-right: 4px; }
.doctools .txt .arr { margin-left: 3px; }
.doctools .wide { margin: 0 5px 0 4px; }
.doctools .sub { width: 34px; justify-content: flex-end; margin-right: 4px; }
.puzzle { margin-left: 3px; }

.form { display: grid; grid-template-columns: 922fr 973fr; column-gap: 7px; grid-template-rows: 26px 24px 24px 24px 24px; padding: 8px 0 0 6px; margin-right: -3px; flex: none; }
.row { display: flex; align-items: center; height: 19px; min-width: 0; position: relative; }
.lab { width: 125px; flex: none; white-space: nowrap; }
.rlab { width: 108px; }
.hlg .rlab { width: 105px; }
.date { width: 37px; margin-left: 11px; }
.ps { width: 25px; margin-left: 6px; }
.rz { width: 189px; }
.check { display: flex; align-items: center; }
.check input { appearance: none; width: 13px; height: 13px; margin: 0 2px 0 0; border: 1px solid #8d8468; border-radius: 2px; background: #ffffff; position: relative; }
.check input:checked::after { content: ""; position: absolute; left: 3px; top: 0; width: 5px; height: 9px; border: solid #1a1a1a; border-width: 0 2px 2px 0; transform: rotate(40deg); }
.check.off { margin-left: 11px; }
.check.off input { border-color: #cfc7aa; }
.field { display: flex; height: 19px; min-width: 0; border: 1px solid #b3a780; border-radius: 4px 0 0 4px; background: #ffffff; overflow: hidden; }
.field input { flex: 1; min-width: 0; width: 0; border: 0; padding: 0 2px; background: none; color: #000000; white-space: pre; outline: none; }
.field button { width: 14px; background: #f5f2dd; border-left: 1px solid #b3a780; color: #000000; }
.field .t { font: bold 11px/14px "Liberation Serif", serif; }
.grow { flex: 1; }
.num { width: 120px; border-radius: 4px; }
.ro { background: #fffbf0; }
.dt { width: 114px; }
.hs { width: 141px; }
.vsd { width: 618px; }
.field.off { border-color: #dcd6c0; }
.field.off button { color: #a09a86; border-color: #faf3d0; }
.req input { margin: 0 2px 1px; padding: 0; border-bottom: 1px dotted #c00000; }

.panels { flex: 1; min-height: 0; display: flex; gap: 8px; padding-left: 6px; margin-right: -3px; }
.act { width: 406px; flex: none; display: flex; flex-direction: column; border: 1px solid #b3a780; border-radius: 5px 5px 0 0; box-shadow: inset 0 2px 0 #f8dfa2; padding: 0 6px 5px 7px; }
.act h3 { display: flex; align-items: center; font: inherit; height: 18px; flex: none; margin: 0 0 8px 2px; gap: 2px; }
.arow { display: flex; align-items: center; height: 19px; flex: none; margin-bottom: 6px; }
.arow label { width: 152px; }
.arow .field { width: 171px; border-radius: 4px; }
.act textarea { flex: 1; min-height: 0; resize: none; border: 1px solid #b3a780; border-radius: 5px; background: #fffbf0; }
.goods { flex: 1; min-width: 0; display: flex; flex-direction: column; }
.tabs { display: flex; height: 21px; flex: none; background: linear-gradient(#b3a780, #b3a780) 0 100% / 100% 1px no-repeat; }
.tabs button { height: 21px; border: 1px solid #cdc49f; border-bottom-color: #b3a780; border-radius: 5px 5px 0 0; background: #ece7ca; padding: 0 10px; margin-right: 7px; gap: 2px; }
.tabs .on { background: #fffbf0; border-color: #b3a780; border-bottom-color: #fffbf0; box-shadow: inset 0 2px 0 #f8dfa2; padding: 0 9px; gap: 3px; }
.body { flex: 1; min-height: 0; border: 1px solid #b3a780; border-top: 0; padding: 6px 6px 22px; display: flex; }
.inner { flex: 1; min-width: 0; border: 1px solid #b3a780; padding: 0 6px 6px; display: flex; flex-direction: column; }
.gtools { display: flex; align-items: center; height: 35px; flex: none; }
.gtools .txt .arr { margin-left: 3px; }
.refill { margin: 0 9px 0 5px; }
.tablebox { flex: 1; min-height: 0; background: #ffffff; border: 1px solid #b3a780; }
.grid { table-layout: fixed; width: 100%; border-collapse: collapse; color: #000000; }
.grid th, .grid td { font-weight: normal; text-align: left; vertical-align: top; white-space: nowrap; overflow: hidden; padding: 2px 4px 0; height: 19px; border: 0 solid #b5cbe8; border-width: 0 1px 1px 0; }
.grid th { color: #544200; height: 21px; padding-top: 3px; border-color: #c2b88f; background: linear-gradient(#fbfaf3, #ede5c3); }
.grid th:last-child, .grid td:last-child { border-right: 0; }
.grid td.r { text-align: right; }
.w-n { width: 38px; } .w-cat { width: 132px; } .w-unit { width: 66px; } .w-pack { width: 300px; } .w-d { width: 142px; } .w-q { width: 168px; } .w-m { width: 175px; }
.grid .pk, .grid .pe { overflow: visible; padding: 4px 1px 0 6px; }
.pk div, .pe div { display: flex; justify-content: space-between; align-items: center; height: 17px; }
.dots { width: 17px; height: 17px; background: #f4efd6; border: 1px solid #ddd5b0; font-weight: bold; color: #544200; }

.comment { display: flex; align-items: center; height: 19px; flex: none; margin: 5px -3px 7px 6px; }
.comment label { width: 78px; }
.foot { display: flex; align-items: center; justify-content: flex-end; height: 27px; flex: none; background: #f5f2dd; border-top: 1px solid #b3a780; }
.foot .annul { margin-left: 10px; }
.foot button { gap: 2px; }
.foot .ok { font-weight: bold; font-size: 12px; margin-left: 10px; }
.foot .write { margin: 0 16px 0 13px; }

.dlg { position: absolute; display: flex; flex-direction: column; background: #fffbf0; }
.dlg header { display: flex; align-items: center; gap: 8px; flex: none; }
.dlg header h2 { flex: 1; font: bold 12px/16px "Liberation Sans", Arial, sans-serif; margin-left: -3px; overflow: hidden; }
.packs { left: 443px; top: 465px; width: 516px; height: 168px; border: 3px solid #b1b1b1; border-top: 0; box-shadow: 1px 1px 0 #777777; }
.packs header { height: 22px; background: #b1b1b1; color: #5e5e5e; padding: 0 5px 0 1px; }
.dtools, .ctools { display: flex; align-items: center; height: 25px; flex: none; border-bottom: 1px solid #b3a780; }
.pbox { margin: 8px; flex: 1; border: 1px solid #b3a780; background: #ffffff; }
.p1 { width: 99px; } .p2 { width: 164px; } .p3 { width: 82px; }
.grid .pe { padding: 1px 0 0 4px; }
.pe span { flex: 1; min-width: 0; overflow: hidden; }
.pfoot { height: 26px; flex: none; display: flex; justify-content: flex-end; align-items: center; background: #f5f2dd; border-top: 1px solid #b3a780; padding-right: 7px; font-weight: bold; font-size: 12px; color: #4d3b00; }
.catalog { left: 434px; top: 574px; width: 420px; height: 205px; border: 3px solid #cdcdcd; border-top: 0; border-bottom: 0; box-shadow: 1px 0 0 #777777; }
.catalog header { height: 21px; background: #cdcdcd; color: #333333; padding: 0 5px 0 0; }
.ctools { height: 26px; background: #f5f2dd; padding-left: 2px; border-top: 1px solid #777777; }
.ctools .hl4 { margin-left: 4px; }
.ctools .txt .arr { margin-left: 3px; }
.acts { margin: 0 4px 0 14px; }
.over { width: 12px; margin-left: auto; flex-direction: column; font-size: 16px; line-height: 10px; gap: 5px; }
.over .arr { border-width: 4px 4px 0; }
.cbox { margin: 8px 8px 0; height: 141px; display: grid; grid-template: 1fr 16px / 1fr 16px; border: 1px solid #b3a780; background: #ffffff; }
.crows { min-height: 0; overflow: hidden; }
.k1 { width: 23px; } .k2 { width: 88px; }
.cbox .grid td { border-color: #c9d3d9; }
.cbox .grid td:first-child { padding: 5px 7px 0; }
.dash { display: block; width: 10px; height: 4px; background: #7fa6c6; border: 1px solid #456f92; }
.sel td:last-child { background: #4a66c4; color: #ffffff; }
.vbar { display: flex; flex-direction: column; background: #fbfaf6; border-left: 1px solid #c2b88f; }
.vbar i { flex: 1; }
.vbar span, .hbar span { display: flex; align-items: center; justify-content: center; font-size: 10px; color: #8a8a80; background: #f1edd8; }
.vbar span { height: 21px; border: 0 solid #c2b88f; border-width: 1px 0; }
.hbar { grid-column: 1 / 2; display: flex; border-top: 1px solid #c2b88f; background: #fbfaf6; }
.hbar span { width: 21px; }
.hbar i { width: 256px; border: 0 solid #c2b88f; border-width: 0 1px; background: linear-gradient(#f8f6ea, #ece5c8); }
.hbar em { flex: 1; }

.hl { position: relative; }
.hl::after { content: ""; position: absolute; border: 5px solid #ed1c24; z-index: 2; pointer-events: none; }
.hl8::after { inset: -6px -3px -7px; }
.hlg::after { left: -6px; top: -3px; width: 239px; height: 25px; }
.hl1::after { inset: -6px; }
.hl9::after { inset: -11px -7px -8px -13px; }
.hl7::after { inset: -9px -8px -8px -12px; }
.hl2::after { inset: -6px -4px; }
.grid .hl5 { overflow: visible; }
.hl5::after { inset: -1px -1px -5px 19px; }
.hl6::after { inset: -8px -12px; }
.hl4::after { inset: -9px -10px -8px -7px; }
.frame3 { position: absolute; left: 11px; top: 95px; width: 382px; height: 23px; border: 5px solid #ed1c24; }

.callout { position: absolute; width: 42px; height: 42px; border: 5px solid #00a2e8; border-radius: 50%; background: #ffffff; color: #ed1c24; font: bold 24px/32px "Noto Sans", sans-serif; text-align: center; z-index: 3; }
.c1 { left: 901px; top: 426px; }
.c2 { left: 668px; top: 567px; }
.c3 { left: 821px; top: 663px; }
.c4 { left: 517px; top: 586px; }
.c5 { left: 805px; top: 540px; }
.c6 { left: 965px; top: 601px; }
.c7 { right: 60px; bottom: 48px; }
.c8 { left: 180px; top: 108px; }
.c9 { right: 272px; bottom: 49px; }
</style>
